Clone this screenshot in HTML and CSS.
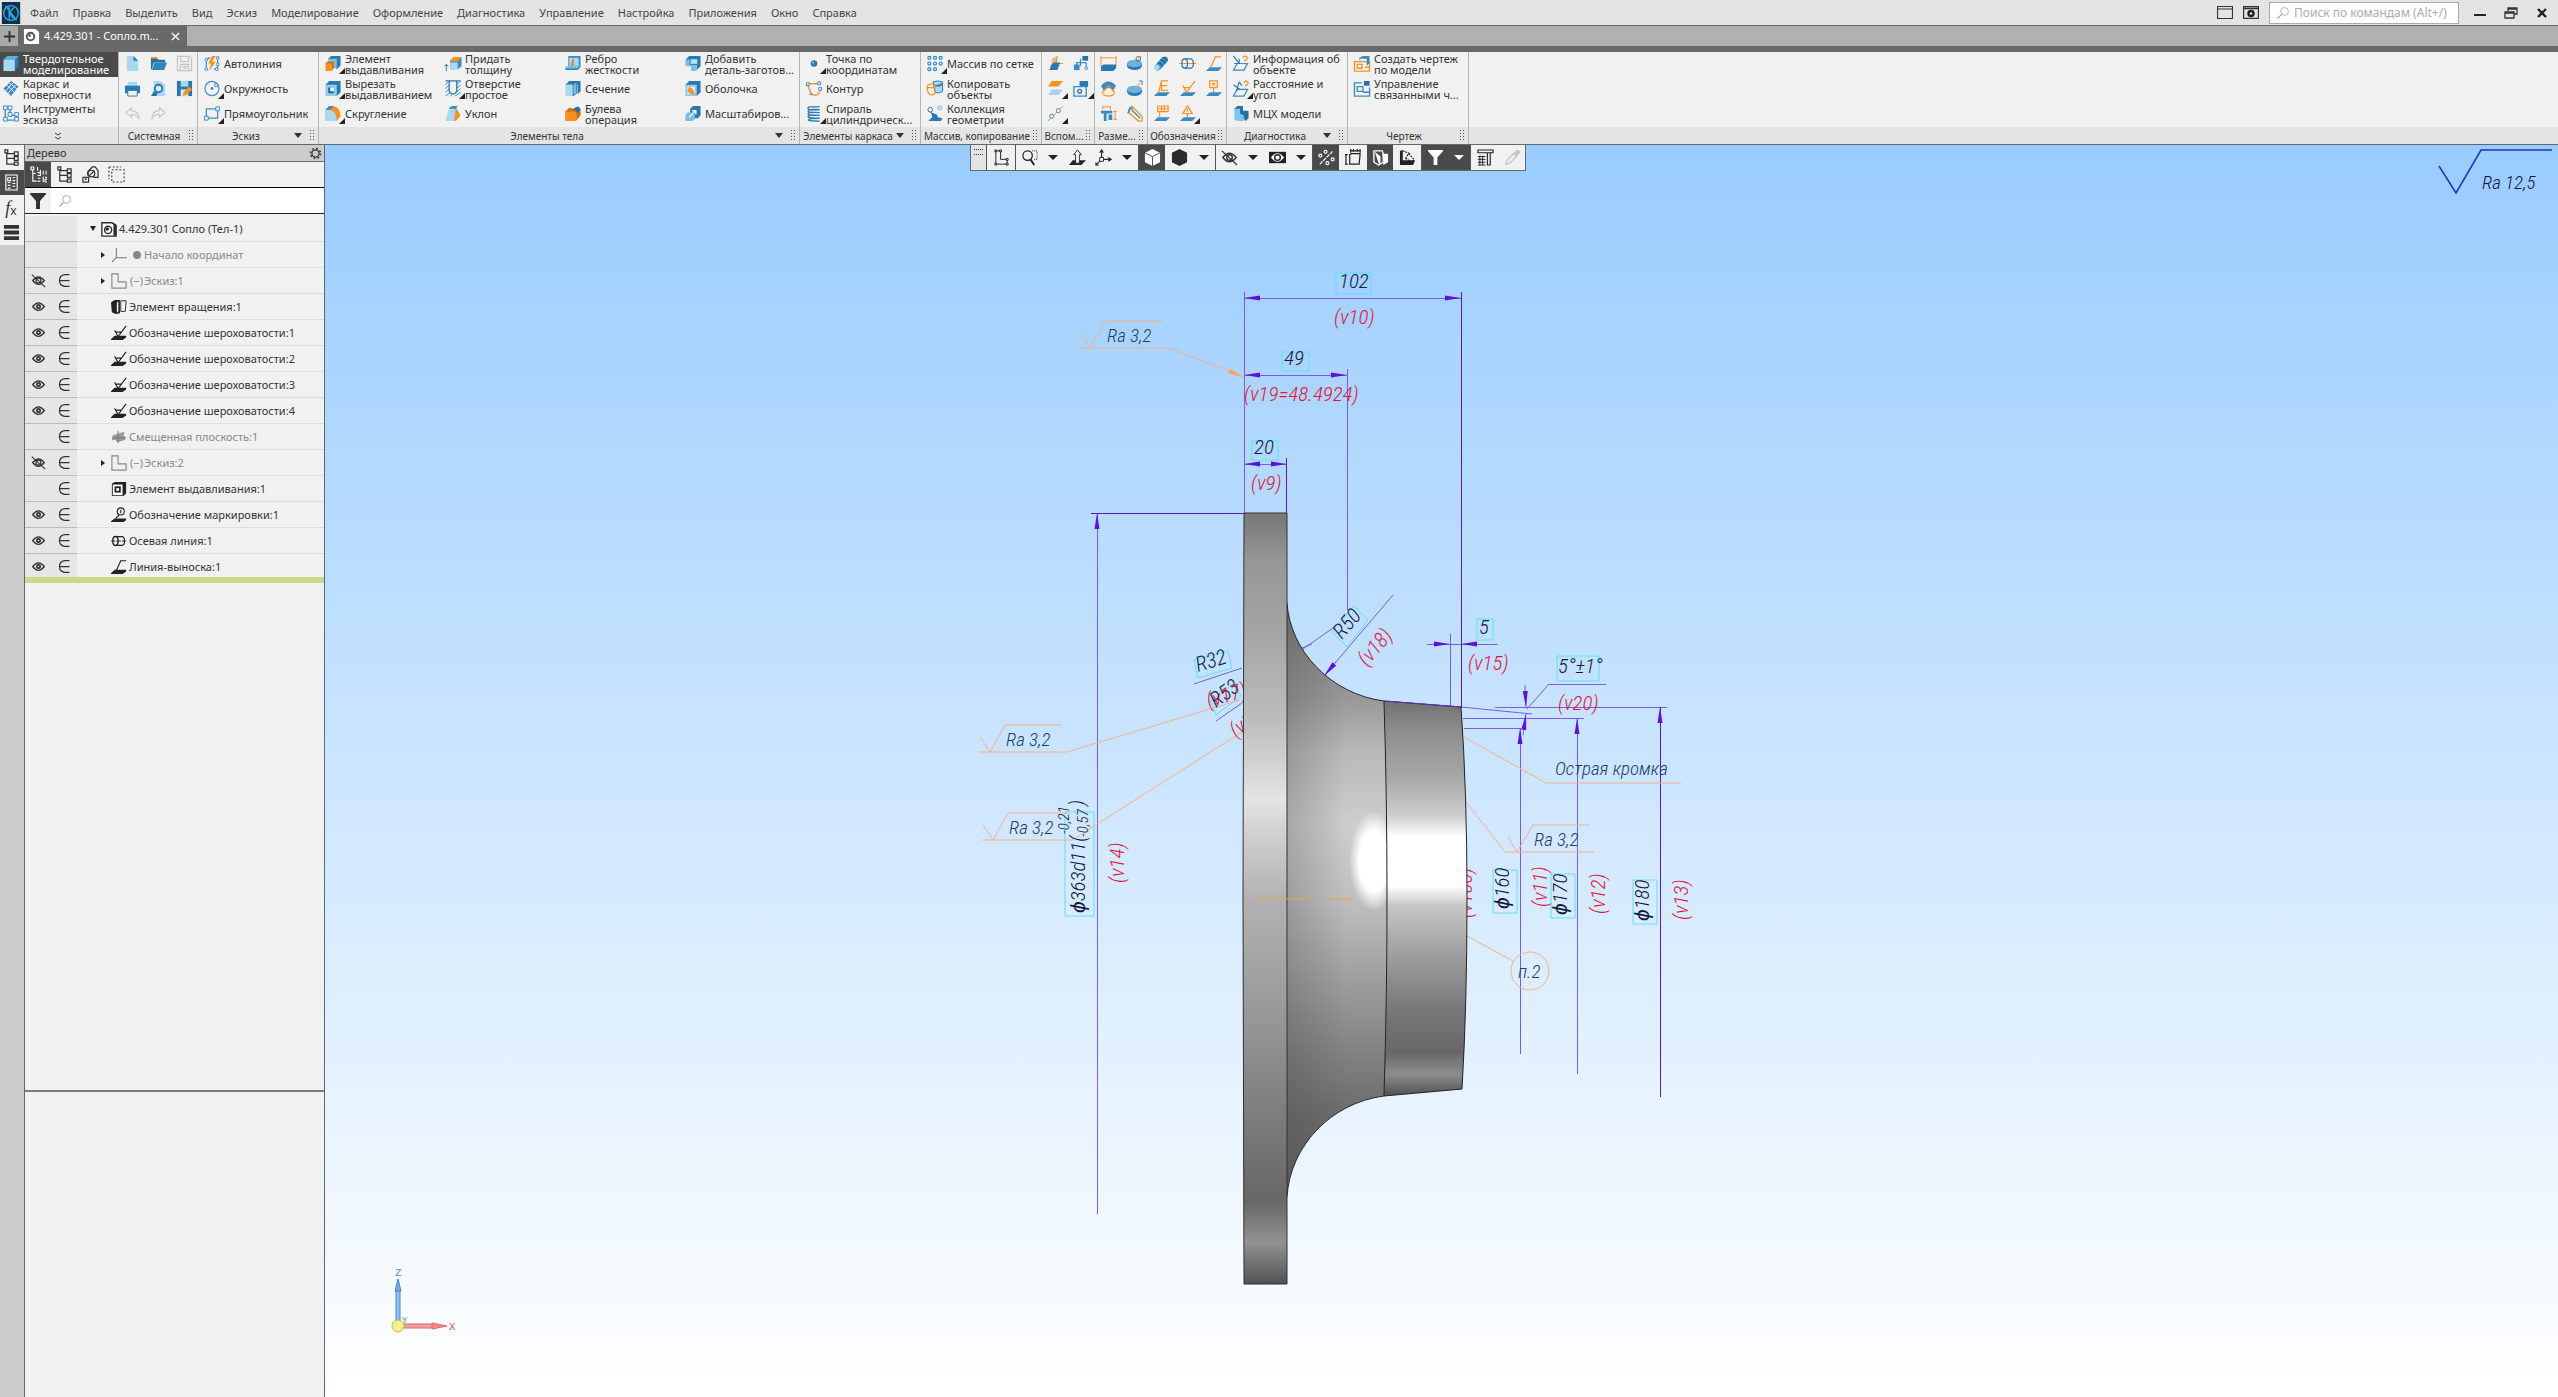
FILE: index.html
```html
<!DOCTYPE html>
<html lang="ru">
<head>
<meta charset="utf-8">
<title>4.429.301 - Сопло</title>
<link rel="stylesheet" href="styles.css">
</head>
<body>
<svg class="sprite" aria-hidden="true">
  <defs>
    <symbol id="i-solid" viewBox="0 0 18 18"><path d="M1 5l4-4h12v11l-4 4z" fill="#2a78b0"/><path d="M1 5l4-4h12l-4 4z" fill="#5db0e0"/><path d="M1 5h12v12H1z" fill="#a9d8f2"/></symbol>
    <symbol id="i-surf" viewBox="0 0 18 18"><path d="M9 1l8 6-8 10-8-8z" fill="#3a8ac4"/><path d="M4 5l9 8M11 3l-8 9M14 5l-8 9M7 3l9 7" stroke="#f1f1f1" fill="none"/></symbol>
    <symbol id="i-sketch" viewBox="0 0 18 18"><path d="M3 3h5v8h7v5H3z" fill="none" stroke="#3a8ac4" stroke-width="1.4"/><path d="M1 1h4v4H1zM6 1h4v4H6zM1 13h4v4H1zM13 13h4v4h-4zM13 8h4v4h-4zM6 8h4v4H6z" fill="#f1f1f1" stroke="#3a8ac4"/></symbol>
    <symbol id="i-new" viewBox="0 0 18 18"><path d="M3 1h7l5 5v11H3z" fill="#a9d8f2"/><path d="M10 1l5 5h-5z" fill="#2a78b0"/></symbol>
    <symbol id="i-open" viewBox="0 0 18 18"><path d="M1 3h6l2 2h7v3H4L2 15H1z" fill="#2a6ea4"/><path d="M5 8h13l-3 8H2z" fill="#2f84bf"/><path d="M1 2h6l1 2H1z" fill="#f7921e"/></symbol>
    <symbol id="i-save-off" viewBox="0 0 18 18"><path d="M1.500 1.500h13l2 2v13h-15zM5 2v5h8V2M4.500 16v-6h9v6M7 12h5M7 14h5" fill="none" stroke="#c4c4c4" stroke-width="1.300"/></symbol>
    <symbol id="i-print" viewBox="0 0 18 18"><path d="M4 2h10v4H4z" fill="#a9d8f2"/><path d="M1 6h16v8H1z" fill="#2a78b0"/><path d="M4 11h10v6H4z" fill="#f1f1f1" stroke="#2a78b0"/></symbol>
    <symbol id="i-preview" viewBox="0 0 18 18"><path d="M4 1h7l5 4v12H4z" fill="#a9d8f2"/><circle cx="9" cy="9" r="4" fill="#d8edf8" stroke="#2a78b0" stroke-width="2"/><path d="M1 17l3-5 4 1-1 4z" fill="#2a78b0"/></symbol>
    <symbol id="i-saveas" viewBox="0 0 18 18"><path d="M1 1h16v16H1z" fill="#2a78b0"/><path d="M5 1h8v6H5z" fill="#a9d8f2"/><path d="M5 10h8v7H5z" fill="#d8edf8"/><path d="M8 13l6-6 3 3-6 6-4 1z" fill="#f7921e"/></symbol>
    <symbol id="i-undo" viewBox="0 0 18 18"><path d="M8 3L2 8l6 5v-3c4 0 7 2 8 5 0-6-3-9-8-9z" fill="none" stroke="#c9c9c9" stroke-width="1.300"/></symbol>
    <symbol id="i-redo" viewBox="0 0 18 18"><path d="M10 3l6 5-6 5v-3c-4 0-7 2-8 5 0-6 3-9 8-9z" fill="none" stroke="#c9c9c9" stroke-width="1.300"/></symbol>
    <symbol id="i-auto" viewBox="0 0 18 18"><path d="M3 15V7q0-4 4-4M15 3v9q0 3-4 3" fill="none" stroke="#3a8ac4" stroke-width="1.300"/><path d="M9 1L5 9h3l-2 8 7-10H9l4-6z" fill="#f7921e"/><g fill="#f1f1f1" stroke="#3a8ac4"><circle cx="3" cy="5" r="1.500"/><circle cx="3" cy="15" r="1.500"/><circle cx="15" cy="3" r="1.500"/><circle cx="15" cy="10" r="1.500"/><circle cx="14" cy="15" r="1.500"/></g></symbol>
    <symbol id="i-circle" viewBox="0 0 18 18"><circle cx="9" cy="9" r="7.500" fill="none" stroke="#3a8ac4" stroke-width="1.200"/><circle cx="9" cy="9" r="1.500" fill="#3a8ac4"/><path d="M12 4h3v3h-3z" fill="#f1f1f1" stroke="#3a8ac4"/></symbol>
    <symbol id="i-rect" viewBox="0 0 18 18"><path d="M3 4h12v10H3z" fill="none" stroke="#3a8ac4" stroke-width="1.300"/><path d="M13 2h4v4h-4zM1 12h4v4H1z" fill="#f1f1f1" stroke="#3a8ac4"/></symbol>
    <symbol id="i-extrude" viewBox="0 0 18 18"><path d="M4 4l3-3h10v10l-4 4z" fill="#2a78b0"/><path d="M4 4h9v10H4z" fill="#7cc0e6"/><path d="M1 9l2-2h7v7l-2 2z" fill="#d06f10"/><path d="M1 9h7v8H1z" fill="#f7921e"/></symbol>
    <symbol id="i-cut" viewBox="0 0 18 18"><path d="M1 5l4-4h12v12l-4 4z" fill="#2a78b0"/><path d="M1 5h12v12H1z" fill="#8fcbea"/><path d="M4 8h6v6H4z" fill="#1f649a"/><path d="M6 8h4v4H6z" fill="#e8f5fc"/></symbol>
    <symbol id="i-fillet" viewBox="0 0 18 18"><path d="M1 5l4-4h4q8 1 8 11l-4 5H1z" fill="#f7921e"/><path d="M1 5h4q8 1 8 12H1z" fill="#a9d8f2"/><path d="M1 5l4-4h5L6 5z" fill="#3a8ac4"/></symbol>
    <symbol id="i-thick" viewBox="0 0 18 18"><path d="M6 6l4-4h8v10l-4 3H6z" fill="#3a8ac4"/><path d="M6 8h8v7H6z" fill="#a9d8f2"/><path d="M6 6l4-4h8l-4 5H6z" fill="#f7921e"/><path d="M2 17V10M0 12l2-2 2 2" fill="none" stroke="#2a78b0"/></symbol>
    <symbol id="i-hole" viewBox="0 0 18 18"><path d="M1 1h16M5 1v11q4 6 8 0V1" fill="none" stroke="#2a78b0" stroke-width="1.400"/><path d="M1 5l4-4M1 9l4-4M1 13l4-4M1 17l6-4M13 5l4-4M13 9l4-4M13 13l4-4M6 17l3-2M11 17l6-4" stroke="#3a8ac4"/></symbol>
    <symbol id="i-draft" viewBox="0 0 18 18"><path d="M5 3l7-2 4 9-4 7H1z" fill="#a9d8f2"/><path d="M12 3l5 8-5 6-2-1z" fill="#f7921e"/><path d="M5 3l3-2h6l-2 3H5z" fill="#3a8ac4"/></symbol>
    <symbol id="i-rib" viewBox="0 0 18 18"><path d="M4 1h13v12l-3 3H1v-3h3z" fill="#3a8ac4"/><path d="M5 3h10v9H5z" fill="#a9d8f2"/><path d="M8 5l2-2v8l-4 2z" fill="#d98a4a"/><path d="M1 13l3-2h12l-2 3H1z" fill="#79bde4"/></symbol>
    <symbol id="i-section" viewBox="0 0 18 18"><path d="M1 5l4-4h12v11l-3 3V5z" fill="#2a78b0"/><path d="M1 5h7v12H1z" fill="#a9d8f2"/><path d="M9 5l4-3v12l-4 3z" fill="#79bde4" stroke="#2a78b0"/></symbol>
    <symbol id="i-bool" viewBox="0 0 18 18"><path d="M1 7l4-4 5 1q6-5 7 2v5l-5 6H1z" fill="#d06f10"/><path d="M1 7h8q5 0 4 9l-2 1H1z" fill="#f7921e"/><path d="M10 4q5-5 7 1l-3 4q-1-4-5-4z" fill="#2a6ea4"/></symbol>
    <symbol id="i-addpart" viewBox="0 0 18 18"><path d="M1 5l4-4h12v11l-4 4V5z" fill="#2a78b0"/><path d="M1 5h8v5h4v7H7v-5H1z" fill="#79bde4"/><path d="M6 4h8v6H6z" fill="#b8e0f5" stroke="#2a78b0"/></symbol>
    <symbol id="i-shell" viewBox="0 0 18 18"><path d="M1 5l4-4h12v12l-4 4z" fill="#2a78b0"/><path d="M1 5h12v12H1z" fill="#8fcbea"/><path d="M3 7h8v8H3z" fill="#d8edf8"/><path d="M5 7l4 3 2 5H7l-4-3z" fill="#f7921e"/></symbol>
    <symbol id="i-scale" viewBox="0 0 18 18"><path d="M6 4l3-3h8v10l-3 3H6z" fill="#2a78b0"/><path d="M1 11l2-3h6l2 2v5l-3 2H1z" fill="#79bde4"/><path d="M5 13l6-6M8 6h4v4" fill="none" stroke="#e8f5fc" stroke-width="1.500"/></symbol>
    <symbol id="i-point" viewBox="0 0 18 18"><circle cx="9" cy="9" r="3.500" fill="#2a78b0"/><circle cx="8" cy="8" r="1" fill="#a9d8f2"/></symbol>
    <symbol id="i-contour" viewBox="0 0 18 18"><path d="M15 4H4q-2 0-1 3l2 5q1 4 4 4h1q4 0 5-4" fill="none" stroke="#f7921e" stroke-width="1.500"/><path d="M13 2h3v3h-3zM1 3h3v3H1z" fill="#f1f1f1" stroke="#3a8ac4"/><path d="M4 15h4M14 8h3v3h-3z" fill="#f1f1f1" stroke="#3a8ac4"/></symbol>
    <symbol id="i-spiral" viewBox="0 0 18 18"><path d="M15 2H4q-3 1 0 3h11q-14-1-12 2 1 1 12 1-14-1-12 2 1 1 12 1-14-1-12 2 1 1 12 1-12 0-12 2 2 1 12 1" fill="none" stroke="#2a78b0" stroke-width="1.400"/></symbol>
    <symbol id="i-array" viewBox="0 0 18 18"><g fill="none" stroke="#2a8acb" stroke-width="1.300"><circle cx="3" cy="3" r="1.600"/><circle cx="9" cy="3" r="1.600"/><circle cx="15" cy="3" r="1.600"/><circle cx="3" cy="9" r="1.600"/><circle cx="9" cy="9" r="1.600"/><circle cx="15" cy="9" r="1.600"/><circle cx="3" cy="15" r="1.600"/><circle cx="9" cy="15" r="1.600"/></g></symbol>
    <symbol id="i-copy" viewBox="0 0 18 18"><path d="M7 2q5-2 10 0v10q-4 3-8 1z" fill="#a9d8f2" stroke="#2a78b0"/><path d="M7 4q5 3 10-1l-1 3q-4 2-8 0z" fill="#2a78b0"/><path d="M1 6q4-4 8 0v8q-3 3-6 1Q0 12 1 6M1 8h7" fill="none" stroke="#f7921e" stroke-width="1.300"/></symbol>
    <symbol id="i-collect" viewBox="0 0 18 18"><circle cx="4" cy="5" r="2.500" fill="none" stroke="#2a78b0"/><path d="M3 7l5 3" stroke="#2a78b0"/><circle cx="14" cy="3" r="3" fill="#b8d6e8"/><path d="M5 8l6 2 1 3 5 1-2 3H2l4-4z" fill="#2a78b0"/></symbol>
    <symbol id="i-plane" viewBox="0 0 18 18"><path d="M5 4l6-3v11l-6 4z" fill="#f2b87a"/><path d="M11 1l-2 8h8M9 9l-7 7" fill="none" stroke="#f7921e"/><path d="M4 11l3-3h7l-3 8H3z" fill="#2a78b0"/></symbol>
    <symbol id="i-lcs" viewBox="0 0 18 18"><path d="M4 16V8h10M8 4v8M14 8v6" fill="none" stroke="#3a8ac4" stroke-width="1.300"/><path d="M10 1h6v5h-6z" fill="#2a6ea4"/><path d="M1 10h6v6H1z" fill="#3a8ac4"/><circle cx="14" cy="14" r="1.500" fill="#f1f1f1" stroke="#3a8ac4"/></symbol>
    <symbol id="i-offplane" viewBox="0 0 18 18"><path d="M5 1h12l-5 6H1z" fill="#f7921e"/><path d="M5 10h12l-5 6H1z" fill="#a9d0ee"/></symbol>
    <symbol id="i-ctrl" viewBox="0 0 18 18"><path d="M7 1h9v6l-5 3-4-3z" fill="#2a78b0"/><path d="M1 7h13v10H1z" fill="#f1f1f1" stroke="#3a8ac4" stroke-width="1.400"/><circle cx="7" cy="12" r="2" fill="none" stroke="#2a78b0" stroke-width="1.400"/></symbol>
    <symbol id="i-axis" viewBox="0 0 18 18"><path d="M1 17L17 1" stroke="#f7921e"/><circle cx="5" cy="12" r="2.200" fill="#f1f1f1" stroke="#3a8ac4"/><circle cx="12" cy="6" r="2.200" fill="#f1f1f1" stroke="#3a8ac4"/></symbol>
    <symbol id="i-dimlin" viewBox="0 0 18 18"><path d="M1 1v11M17 1v11M1 3h16" stroke="#f7921e" fill="none"/><path d="M1 12l3-2h13v4l-3 3H1z" fill="#2a78b0"/></symbol>
    <symbol id="i-dimdia" viewBox="0 0 18 18"><ellipse cx="9" cy="11" rx="8" ry="5" fill="#2a78b0"/><ellipse cx="9" cy="9" rx="8" ry="4" fill="#62b4e2"/><path d="M7 11L16 1" stroke="#f7921e"/><circle cx="13" cy="4" r="2.500" fill="none" stroke="#2a6ea4"/></symbol>
    <symbol id="i-dimang" viewBox="0 0 18 18"><path d="M1 6q8-9 16 0l-3 5q-5-5-10 0z" fill="#3a8ac4"/><path d="M2 14l7-8 7 8M3 15q6 4 12 0" fill="none" stroke="#f7921e" stroke-width="1.300"/></symbol>
    <symbol id="i-dimrad" viewBox="0 0 18 18"><ellipse cx="9" cy="12" rx="8" ry="5" fill="#2a78b0"/><ellipse cx="9" cy="10" rx="8" ry="4" fill="#62b4e2"/><path d="M8 11l7-8" stroke="#f7921e"/><path d="M14 1h3v4" fill="none" stroke="#2a6ea4"/></symbol>
    <symbol id="i-dimgrp" viewBox="0 0 18 18"><path d="M3 1v4M11 1v4M3 2h8M16 6v10M14 7h4M14 15h4" stroke="#f7921e" fill="none"/><path d="M1 6h12v3H1zM4 9h3v8H4zM9 10h4v6H9z" fill="#3a8ac4"/></symbol>
    <symbol id="i-dimline2" viewBox="0 0 18 18"><path d="M6 1l11 11v5H13L3 8M6 1L3 8" fill="none" stroke="#f7921e" stroke-width="1.300"/><path d="M6 5l9 9M2 9l2-6 3 1" fill="none" stroke="#3a8ac4" stroke-width="1.500"/></symbol>
    <symbol id="i-thread" viewBox="0 0 18 18"><path d="M2 11l8-9q6-2 6 4l-8 9q-6 4-6-4z" fill="#3a8ac4"/><path d="M5 8q4 0 5 4M8 5q4 0 5 4M11 3q3 0 4 3" fill="none" stroke="#1b4e78"/><ellipse cx="4" cy="13" rx="3" ry="3" fill="#a9d8f2"/></symbol>
    <symbol id="i-axisline" viewBox="0 0 18 18"><path d="M0 9h18" stroke="#f7921e"/><path d="M6 4h7l2 2v6l-2 2H6" fill="none" stroke="#2a78b0" stroke-width="1.300"/><ellipse cx="6" cy="9" rx="3" ry="5" fill="none" stroke="#2a78b0" stroke-width="1.300"/></symbol>
    <symbol id="i-base" viewBox="0 0 18 18"><path d="M5 13h13l-4 4H1z" fill="#3a8ac4"/></symbol>
    <symbol id="i-leader" viewBox="0 0 18 18"><use href="#i-base"/><path d="M6 13l5-11h6" fill="none" stroke="#f7921e" stroke-width="1.300"/></symbol>
    <symbol id="i-mark" viewBox="0 0 18 18"><use href="#i-base"/><path d="M6 13l3-12v10h7M9 1h7M9 6h6" fill="none" stroke="#f7921e" stroke-width="1.300"/></symbol>
    <symbol id="i-rough" viewBox="0 0 18 18"><use href="#i-base"/><path d="M4 6l4 7 9-12M5 8h7" fill="none" stroke="#f7921e" stroke-width="1.300"/></symbol>
    <symbol id="i-datum" viewBox="0 0 18 18"><use href="#i-base"/><path d="M5 1h8v7H5zM9 8v5M7 4h4M9 3v3" fill="none" stroke="#f7921e" stroke-width="1.300"/></symbol>
    <symbol id="i-tol" viewBox="0 0 18 18"><use href="#i-base"/><path d="M5 1h11v6H5zM9 1v6M12 1v6M5 4h11M7 7v6" fill="none" stroke="#f7921e" stroke-width="1.200"/></symbol>
    <symbol id="i-sign" viewBox="0 0 18 18"><use href="#i-base"/><path d="M9 1l5 8H4zM9 9v4M9 4v3" fill="none" stroke="#f7921e" stroke-width="1.300"/></symbol>
    <symbol id="i-info" viewBox="0 0 18 18"><path d="M5 9h11l-4 7H1z" fill="none" stroke="#3a8ac4" stroke-width="1.300"/><path d="M1 1l6 8M7 4v5H2" fill="none" stroke="#2a78b0" stroke-width="1.300"/><path d="M11 3q2-3 4-1t-2 4v1M13 9v1" fill="none" stroke="#f7921e" stroke-width="1.400"/></symbol>
    <symbol id="i-dist" viewBox="0 0 18 18"><path d="M5 10h11l-4 7H1z" fill="none" stroke="#3a8ac4" stroke-width="1.300"/><path d="M1 5l7 5M7 2L4 12M7 2l3 4" fill="none" stroke="#2a78b0" stroke-width="1.200"/><path d="M12 3q2-3 4-1t-2 4v1" fill="none" stroke="#f7921e" stroke-width="1.400"/></symbol>
    <symbol id="i-mcx" viewBox="0 0 18 18"><path d="M2 4l3-3h6v5h6v8l-3 3z" fill="#2a6ea4"/><path d="M2 4h6v5l4 2v6H5l-3-2z" fill="#7cc6ee"/></symbol>
    <symbol id="i-mkdraw" viewBox="0 0 18 18"><path d="M1 7h16v10H1zM4 10h5v4H4zM12 13h5" fill="none" stroke="#f7921e" stroke-width="1.400"/><path d="M6 3l4-2h7v8l-3 2V4H7v3" fill="#3a8ac4"/></symbol>
    <symbol id="i-linked" viewBox="0 0 18 18"><path d="M9 3H1v14h16V8M4 7h6v5H4zM10 13h7" fill="none" stroke="#3a8ac4" stroke-width="1.400"/><path d="M11 1h6v5h-6z" fill="#2a6ea4"/></symbol>

    <symbol id="v-tree" viewBox="0 0 18 18"><path d="M4 4v12h8M4 5h8M4 10h8" fill="none" stroke="currentColor" stroke-width="1.300"/><path d="M2 1h3v3H2zM12 3h4v4h-4zM12 8h4v4h-4zM12 14h4v3h-4z" fill="none" stroke="currentColor" stroke-width="1.300"/></symbol>
    <symbol id="v-list" viewBox="0 0 18 18"><path d="M3 1h12v16H3zM5 4h3v3H5zM5 9h3M5 12h3M5 15h3M10 4h3M10 7h3M10 10h3M10 13h3" fill="none" stroke="currentColor" stroke-width="1.200"/></symbol>
    <symbol id="v-bars" viewBox="0 0 18 18"><path d="M1 1h16v4H1zM1 7h16v4H1zM1 13h16v4H1z" fill="currentColor"/></symbol>
    <symbol id="v-tree2" viewBox="0 0 18 18"><path d="M1 1h3v3H1zM3 4v12h4M3 8h3M8 1v4M8 7h3v3H8M11 4v5M11 5v3M14 5v4M17 5v4M8 13h3M8 16h3M14 11v6M16 12h2v2h-2v3h2" fill="none" stroke="currentColor" stroke-width="1.200"/></symbol>
    <symbol id="v-rel" viewBox="0 0 18 18"><path d="M6 6l5-5h3l3 4v7h-5M6 6v4M1 12h6v5H1zM7 11l6-6" fill="none" stroke="currentColor" stroke-width="1.300"/><circle cx="10" cy="8" r="3.500" fill="none" stroke="currentColor" stroke-width="1.300"/><circle cx="4" cy="14" r="1" fill="currentColor"/></symbol>
    <symbol id="v-dash" viewBox="0 0 18 18"><path d="M4 4h13v13H4zM1 1h13M1 1v13" fill="none" stroke="currentColor" stroke-width="1.200" stroke-dasharray="2 2"/></symbol>
    <symbol id="v-funnel" viewBox="0 0 18 18"><path d="M1 1h16v1l-6 7v8H7V9L1 2z" fill="currentColor"/></symbol>
    <symbol id="v-search" viewBox="0 0 18 18"><circle cx="11" cy="7" r="5" fill="none" stroke="#999"/><path d="M7 11l-5 5" stroke="#999" stroke-width="1.500"/></symbol>
    <symbol id="v-gear" viewBox="0 0 18 18"><circle cx="9" cy="9" r="5" fill="none" stroke="currentColor" stroke-width="1.800"/><circle cx="9" cy="9" r="7" fill="none" stroke="currentColor" stroke-width="2" stroke-dasharray="2.500 3"/></symbol>
    <symbol id="v-eye" viewBox="0 0 18 18"><path d="M2 9q7-9 14 0-7 9-14 0z" fill="none" stroke="#333" stroke-width="1.500"/><circle cx="9" cy="9" r="3" fill="#333"/><circle cx="9" cy="9" r="1" fill="#e6e6e6"/></symbol>
    <symbol id="v-eyeoff" viewBox="0 0 18 18"><path d="M2 9q7-9 14 0-7 9-14 0z" fill="none" stroke="#333" stroke-width="1.500"/><circle cx="9" cy="9" r="3" fill="none" stroke="#333" stroke-width="1.500"/><path d="M1 2l16 15" stroke="#333" stroke-width="1.300"/></symbol>
    <symbol id="v-in" viewBox="0 0 18 18"><path d="M15 2H9Q3 3 3 9t6 7h6M3 9h12" fill="none" stroke="#333" stroke-width="1.500"/></symbol>
    <symbol id="v-part" viewBox="0 0 18 18"><path d="M1 2h11l5 3v12H1z" fill="#fff" stroke="#2b2b2b" stroke-width="1.500"/><path d="M12 1l5 3v12l-3 1V4z" fill="#2b2b2b"/><circle cx="8" cy="10" r="4" fill="none" stroke="#2b2b2b" stroke-width="1.600"/><circle cx="7" cy="9" r="2" fill="#2b2b2b"/></symbol>
    <symbol id="v-origin" viewBox="0 0 18 18"><path d="M6 1v11h12M6 12l-5 5" fill="none" stroke="#777" stroke-width="1.200"/></symbol>
    <symbol id="v-lshape" viewBox="0 0 18 18"><path d="M1 1h7v9h9v7H1z" fill="none" stroke="#888" stroke-width="1.300"/></symbol>
    <symbol id="v-revolve" viewBox="0 0 18 18"><path d="M0 4l4-3h6v15l-5 1-4-2z" fill="#222"/><path d="M6 4l3-2v12l-3 2zM11 2h6l-1 12h-5z" fill="#f1f1f1" stroke="#222"/><path d="M9 1v16" stroke="#222" stroke-dasharray="3 1"/></symbol>
    <symbol id="v-rough" viewBox="0 0 18 18"><path d="M4 12h13v2l-4 3H0v-1z" fill="#222"/><path d="M4 6l4 7 9-12M5 8h7" fill="none" stroke="#222" stroke-width="1.300"/></symbol>
    <symbol id="v-plane" viewBox="0 0 18 18"><path d="M2 7l13-4-1 6-13 4zM4 11l12-3v4l-9 3z" fill="#999"/><path d="M8 2v14M1 10h16" stroke="#777"/></symbol>
    <symbol id="v-extr" viewBox="0 0 18 18"><path d="M1 3l3-2h13v13l-3 3H1z" fill="#222"/><path d="M2 4h11v12H2z" fill="#fff"/><path d="M4 6h7v7H4z" fill="#222"/><path d="M6 8h3v3H6z" fill="#fff"/></symbol>
    <symbol id="v-mark" viewBox="0 0 18 18"><path d="M4 13h13v2l-3 2H0v-1z" fill="#222"/><circle cx="11" cy="5" r="4" fill="none" stroke="#222" stroke-width="1.200"/><path d="M5 13l4-4M11 3v4" stroke="#222" stroke-width="1.200"/></symbol>
    <symbol id="v-axis" viewBox="0 0 18 18"><path d="M0 9h18" stroke="#222" stroke-dasharray="5 1"/><path d="M6 4h7l2 2v6l-2 2H6" fill="none" stroke="#222" stroke-width="1.300"/><ellipse cx="5" cy="9" rx="3" ry="5" fill="none" stroke="#222" stroke-width="1.600"/></symbol>
    <symbol id="v-leader" viewBox="0 0 18 18"><path d="M4 12h13v2l-4 3H0v-1z" fill="#222"/><path d="M6 13l5-11h6" fill="none" stroke="#222" stroke-width="1.300"/></symbol>

    <symbol id="t-zoom" viewBox="0 0 18 18"><circle cx="7" cy="7" r="5" fill="none" stroke="#222" stroke-width="1.300"/><path d="M10 11l4 6" stroke="#222" stroke-width="2"/><path d="M12 2h5v9h-3" fill="none" stroke="#222" stroke-dasharray="1 1"/></symbol>
    <symbol id="t-normal" viewBox="0 0 18 18"><path d="M4 12h14l-5 5H0z" fill="#222"/><path d="M7 15V6H5l4-5 4 5h-2v9z" fill="#fff" stroke="#222"/></symbol>
    <symbol id="t-orient" viewBox="0 0 18 18"><path d="M7 10V2M7 11h9M7 11l-6 6M5 4l2-3 2 3M14 9l3 2-3 2M1 14v3h3" fill="none" stroke="#222" stroke-width="1.200"/><path d="M5 9h4v4H5z" fill="#fff" stroke="#222"/></symbol>
    <symbol id="t-cube" viewBox="0 0 18 18"><path d="M9 0l8 4v10l-8 4-8-4V4z" fill="#fff"/><path d="M1 4l8 4 8-4M9 8v10" fill="none" stroke="#4a4a4a"/></symbol>
    <symbol id="t-hex" viewBox="0 0 18 18"><path d="M9 0l8 4v10l-8 4-8-4V4z" fill="#2b2b2b"/></symbol>
    <symbol id="t-scene" viewBox="0 0 18 18"><path d="M0 3h18v12H0z" fill="#222"/><path d="M2 9q7-9 14 0-7 9-14 0z" fill="#fff"/><circle cx="9" cy="9" r="3" fill="#fff" stroke="#222" stroke-width="1.500"/></symbol>
    <symbol id="t-constr" viewBox="0 0 18 18"><path d="M2 16L16 2" stroke="#fff" stroke-width="1.300" stroke-dasharray="4 1"/><g fill="none" stroke="#fff" stroke-width="1.200"><circle cx="2.500" cy="7" r="1.600"/><circle cx="8" cy="3" r="1.600"/><circle cx="10" cy="15" r="1.600"/><circle cx="15.500" cy="11" r="1.600"/></g></symbol>
    <symbol id="t-dims" viewBox="0 0 18 18"><path d="M5 6l2-1h9l-1 11H5zM1 6v10M0 6h3M0 16h3M6 0v4M16 0v4M6 2h10M9 0v3M13 0v3" fill="none" stroke="#222" stroke-width="1.300"/></symbol>
    <symbol id="t-render" viewBox="0 0 18 18"><path d="M2 2h9l1 4v8l-5 3-5-3z" fill="none" stroke="#fff" stroke-width="1.400"/><path d="M3 3l6 5v8l-2-1zM11 5h6v9l-5 3z" fill="#fff"/></symbol>
    <symbol id="t-cut" viewBox="0 0 18 18"><path d="M1 2l3-1v11h13l-2 5H1z" fill="#222"/><path d="M7 10l3-5 6 6-2 3zM4 2l8 3" fill="none" stroke="#222" stroke-width="1.200" stroke-dasharray="2 1"/></symbol>
    <symbol id="t-caliper" viewBox="0 0 18 18"><path d="M1 1h16v3H1zM11 4h3v13h-3z" fill="none" stroke="#222" stroke-width="1.200"/><path d="M1 8h8M1 11h8M1 14h8M1 17h8M3 7v10M6 7v10" stroke="#222"/></symbol>
    <symbol id="t-pick" viewBox="0 0 18 18"><path d="M2 16l1-4 7-7 3 3-7 7z" fill="none" stroke="#c4c4c4" stroke-width="1.300"/><path d="M10 4l4-3q4 0 3 3l-3 4z" fill="#c4c4c4"/></symbol>
  </defs>
</svg>

<header class="titlebar">
  <svg class="logo" viewBox="0 0 20 24"><path d="M0 0h20v24H0z" fill="#0c3350"/><circle cx="10" cy="12" r="8" fill="none" stroke="#35a8e0" stroke-width="1.500"/><path d="M8 5v14M13 6l-5 6 5 6M4 4l12 16" fill="none" stroke="#35a8e0" stroke-width="1.500"/></svg>
  <nav class="menu">
    <a href="#">Файл</a><a href="#">Правка</a><a href="#">Выделить</a><a href="#">Вид</a><a href="#">Эскиз</a><a href="#">Моделирование</a><a href="#">Оформление</a><a href="#">Диагностика</a><a href="#">Управление</a><a href="#">Настройка</a><a href="#">Приложения</a><a href="#">Окно</a><a href="#">Справка</a>
  </nav>
  <div class="title-tools">
    <button aria-label="Окна"><svg viewBox="0 0 16 13"><path d="M.500.500h15v12H.500zM0 3h16" fill="none" stroke="#333" stroke-width="1.200"/></svg></button>
    <button aria-label="Настройка окна"><svg viewBox="0 0 16 13"><path d="M.500.500h15v12H.500zM0 2.500h16" fill="none" stroke="#333" stroke-width="1.400"/><circle cx="8" cy="7.500" r="2.500" fill="none" stroke="#222" stroke-width="2.500"/></svg></button>
  </div>
  <label class="search"><svg viewBox="0 0 18 18"><use href="#v-search"/></svg><input type="text" aria-label="Поиск по командам" placeholder="Поиск по командам (Alt+/)"></label>
  <div class="win-tools">
    <button aria-label="Свернуть"><svg viewBox="0 0 14 14"><path d="M1 9h12" stroke="#222" stroke-width="2"/></svg></button>
    <button aria-label="Восстановить"><svg viewBox="0 0 14 14"><path d="M1 6h9v6H1zM4 5V2h9v6h-3M4 3h9M1 7h9" fill="none" stroke="#333" stroke-width="1.300"/></svg></button>
    <button aria-label="Закрыть"><svg viewBox="0 0 14 14"><path d="M3 3l8 8M11 3l-8 8" stroke="#222" stroke-width="2.400"/></svg></button>
  </div>
</header>

<div class="tabs">
  <button class="tab-add" aria-label="Новая вкладка"><svg viewBox="0 0 14 14"><path d="M7 1v12M1 7h12" stroke="#333" stroke-width="2"/></svg></button>
  <div class="tab"><svg viewBox="0 0 18 18"><path d="M1 1h12l4 3v13H1z" fill="#fff"/><circle cx="8" cy="9" r="4" fill="none" stroke="#555" stroke-width="2"/><circle cx="7" cy="8" r="1.500" fill="#555"/></svg><span>4.429.301 - Сопло.m...</span><button aria-label="Закрыть вкладку"><svg viewBox="0 0 10 10"><path d="M1 1l8 8M9 1L1 9" stroke="#fff" stroke-width="1.600"/></svg></button></div>
</div>

<div class="ribbon">
  <section class="group g-modes">
    <div class="cmds">
      <button class="cmd active"><svg><use href="#i-solid"/></svg><span>Твердотельное<br>моделирование</span></button>
      <button class="cmd"><svg><use href="#i-surf"/></svg><span>Каркас и<br>поверхности</span></button>
      <button class="cmd"><svg><use href="#i-sketch"/></svg><span>Инструменты<br>эскиза</span></button>
    </div>
    <footer><span><svg class="chev" viewBox="0 0 8 8"><path d="M1 1l3 2 3-2M1 5l3 2 3-2" fill="none" stroke="#333"/></svg></span></footer>
  </section>
  <section class="group">
    <div class="icons cols3">
      <button aria-label="Создать"><svg><use href="#i-new"/></svg></button><button aria-label="Открыть"><svg><use href="#i-open"/></svg></button><button aria-label="Сохранить"><svg><use href="#i-save-off"/></svg></button>
      <button aria-label="Печать"><svg><use href="#i-print"/></svg></button><button aria-label="Просмотр"><svg><use href="#i-preview"/></svg></button><button aria-label="Сохранить как"><svg><use href="#i-saveas"/></svg></button>
      <button aria-label="Отменить"><svg><use href="#i-undo"/></svg></button><button aria-label="Повторить"><svg><use href="#i-redo"/></svg></button>
    </div>
    <footer><span>Системная</span><i class="grip"></i></footer>
  </section>
  <section class="group">
    <div class="cmds">
      <button class="cmd"><svg><use href="#i-auto"/></svg><span>Автолиния</span></button>
      <button class="cmd more"><svg><use href="#i-circle"/></svg><span>Окружность</span></button>
      <button class="cmd more"><svg><use href="#i-rect"/></svg><span>Прямоугольник</span></button>
    </div>
    <footer><span>Эскиз</span><i class="drop"></i><i class="grip"></i></footer>
  </section>
  <section class="group">
    <div class="cmds">
      <button class="cmd more"><svg><use href="#i-extrude"/></svg><span>Элемент<br>выдавливания</span></button>
      <button class="cmd more"><svg><use href="#i-cut"/></svg><span>Вырезать<br>выдавливанием</span></button>
      <button class="cmd more"><svg><use href="#i-fillet"/></svg><span>Скругление</span></button>
      <button class="cmd"><svg><use href="#i-thick"/></svg><span>Придать<br>толщину</span></button>
      <button class="cmd more"><svg><use href="#i-hole"/></svg><span>Отверстие<br>простое</span></button>
      <button class="cmd"><svg><use href="#i-draft"/></svg><span>Уклон</span></button>
      <button class="cmd"><svg><use href="#i-rib"/></svg><span>Ребро<br>жесткости</span></button>
      <button class="cmd"><svg><use href="#i-section"/></svg><span>Сечение</span></button>
      <button class="cmd"><svg><use href="#i-bool"/></svg><span>Булева<br>операция</span></button>
      <button class="cmd"><svg><use href="#i-addpart"/></svg><span>Добавить<br>деталь-заготов...</span></button>
      <button class="cmd"><svg><use href="#i-shell"/></svg><span>Оболочка</span></button>
      <button class="cmd"><svg><use href="#i-scale"/></svg><span>Масштабиров...</span></button>
    </div>
    <footer><span>Элементы тела</span><i class="drop"></i><i class="grip"></i></footer>
  </section>
  <section class="group">
    <div class="cmds">
      <button class="cmd more"><svg><use href="#i-point"/></svg><span>Точка по<br>координатам</span></button>
      <button class="cmd"><svg><use href="#i-contour"/></svg><span>Контур</span></button>
      <button class="cmd more"><svg><use href="#i-spiral"/></svg><span>Спираль<br>цилиндрическ...</span></button>
    </div>
    <footer><span>Элементы каркаса</span><i class="drop"></i><i class="grip"></i></footer>
  </section>
  <section class="group">
    <div class="cmds">
      <button class="cmd more"><svg><use href="#i-array"/></svg><span>Массив по сетке</span></button>
      <button class="cmd"><svg><use href="#i-copy"/></svg><span>Копировать<br>объекты</span></button>
      <button class="cmd"><svg><use href="#i-collect"/></svg><span>Коллекция<br>геометрии</span></button>
    </div>
    <footer><span>Массив, копирование</span><i class="grip"></i></footer>
  </section>
  <section class="group">
    <div class="icons cols2">
      <button aria-label="Плоскость"><svg><use href="#i-plane"/></svg></button><button aria-label="Система координат"><svg><use href="#i-lcs"/></svg></button>
      <button class="more" aria-label="Смещенная плоскость"><svg><use href="#i-offplane"/></svg></button><button class="more" aria-label="Контрольная точка"><svg><use href="#i-ctrl"/></svg></button>
      <button class="more" aria-label="Ось"><svg><use href="#i-axis"/></svg></button>
    </div>
    <footer><span>Вспом...</span><i class="grip"></i></footer>
  </section>
  <section class="group">
    <div class="icons cols2">
      <button aria-label="Линейный размер"><svg><use href="#i-dimlin"/></svg></button><button aria-label="Диаметральный размер"><svg><use href="#i-dimdia"/></svg></button>
      <button aria-label="Угловой размер"><svg><use href="#i-dimang"/></svg></button><button aria-label="Радиальный размер"><svg><use href="#i-dimrad"/></svg></button>
      <button aria-label="Размеры группы"><svg><use href="#i-dimgrp"/></svg></button><button aria-label="Размер линии"><svg><use href="#i-dimline2"/></svg></button>
    </div>
    <footer><span>Разме...</span><i class="grip"></i></footer>
  </section>
  <section class="group">
    <div class="icons cols3">
      <button aria-label="Резьба"><svg><use href="#i-thread"/></svg></button><button aria-label="Осевая линия"><svg><use href="#i-axisline"/></svg></button><button aria-label="Линия-выноска"><svg><use href="#i-leader"/></svg></button>
      <button aria-label="Клеймо"><svg><use href="#i-mark"/></svg></button><button aria-label="Шероховатость"><svg><use href="#i-rough"/></svg></button><button aria-label="База"><svg><use href="#i-datum"/></svg></button>
      <button aria-label="Допуск формы"><svg><use href="#i-tol"/></svg></button><button class="more" aria-label="Знак"><svg><use href="#i-sign"/></svg></button>
    </div>
    <footer><span>Обозначения</span><i class="grip"></i></footer>
  </section>
  <section class="group">
    <div class="cmds">
      <button class="cmd"><svg><use href="#i-info"/></svg><span>Информация об<br>объекте</span></button>
      <button class="cmd more"><svg><use href="#i-dist"/></svg><span>Расстояние и<br>угол</span></button>
      <button class="cmd"><svg><use href="#i-mcx"/></svg><span>МЦХ модели</span></button>
    </div>
    <footer><span>Диагностика</span><i class="drop"></i><i class="grip"></i></footer>
  </section>
  <section class="group">
    <div class="cmds">
      <button class="cmd"><svg><use href="#i-mkdraw"/></svg><span>Создать чертеж<br>по модели</span></button>
      <button class="cmd"><svg><use href="#i-linked"/></svg><span>Управление<br>связанными ч...</span></button>
    </div>
    <footer><span>Чертеж</span><i class="grip"></i></footer>
  </section>
  <div class="ribbon-rest"></div>
</div>

<main class="work">
  <nav class="rail">
    <button aria-label="Дерево"><svg><use href="#v-tree"/></svg></button>
    <button class="active" aria-label="Параметры"><svg><use href="#v-list"/></svg></button>
    <button class="fx"><i>f</i><sub>x</sub></button>
    <button aria-label="Меню"><svg><use href="#v-bars"/></svg></button>
  </nav>
  <aside class="panel">
    <h2><span>Дерево</span><svg><use href="#v-gear"/></svg></h2>
    <div class="panel-tools">
      <button class="active" aria-label="Структура"><svg><use href="#v-tree2"/></svg></button>
      <button aria-label="Последовательность"><svg><use href="#v-tree"/></svg></button>
      <button aria-label="Связи"><svg><use href="#v-rel"/></svg></button>
      <button aria-label="Выделение"><svg><use href="#v-dash"/></svg></button>
    </div>
    <label class="filter"><span><svg><use href="#v-funnel"/></svg></span><svg class="mag"><use href="#v-search"/></svg><input type="text" aria-label="Фильтр"></label>
    <ul class="tree">
      <li><b></b><b></b><p class="root"><i class="open"></i><svg><use href="#v-part"/></svg><span>4.429.301 Сопло (Тел-1)</span></p></li>
      <li class="dim"><b></b><b></b><p><i class="closed"></i><svg><use href="#v-origin"/></svg><em class="dot"></em><span>Начало координат</span></p></li>
      <li class="dim"><b><svg><use href="#v-eyeoff"/></svg></b><b><svg><use href="#v-in"/></svg></b><p><i class="closed"></i><svg><use href="#v-lshape"/></svg><em>(‒)</em><span>Эскиз:1</span></p></li>
      <li><b><svg><use href="#v-eye"/></svg></b><b><svg><use href="#v-in"/></svg></b><p><i></i><svg><use href="#v-revolve"/></svg><span>Элемент вращения:1</span></p></li>
      <li><b><svg><use href="#v-eye"/></svg></b><b><svg><use href="#v-in"/></svg></b><p><i></i><svg><use href="#v-rough"/></svg><span>Обозначение шероховатости:1</span></p></li>
      <li><b><svg><use href="#v-eye"/></svg></b><b><svg><use href="#v-in"/></svg></b><p><i></i><svg><use href="#v-rough"/></svg><span>Обозначение шероховатости:2</span></p></li>
      <li><b><svg><use href="#v-eye"/></svg></b><b><svg><use href="#v-in"/></svg></b><p><i></i><svg><use href="#v-rough"/></svg><span>Обозначение шероховатости:3</span></p></li>
      <li><b><svg><use href="#v-eye"/></svg></b><b><svg><use href="#v-in"/></svg></b><p><i></i><svg><use href="#v-rough"/></svg><span>Обозначение шероховатости:4</span></p></li>
      <li class="dim"><b></b><b><svg><use href="#v-in"/></svg></b><p><i></i><svg><use href="#v-plane"/></svg><span>Смещенная плоскость:1</span></p></li>
      <li class="dim"><b><svg><use href="#v-eyeoff"/></svg></b><b><svg><use href="#v-in"/></svg></b><p><i class="closed"></i><svg><use href="#v-lshape"/></svg><em>(‒)</em><span>Эскиз:2</span></p></li>
      <li><b></b><b><svg><use href="#v-in"/></svg></b><p><i></i><svg><use href="#v-extr"/></svg><span>Элемент выдавливания:1</span></p></li>
      <li><b><svg><use href="#v-eye"/></svg></b><b><svg><use href="#v-in"/></svg></b><p><i></i><svg><use href="#v-mark"/></svg><span>Обозначение маркировки:1</span></p></li>
      <li><b><svg><use href="#v-eye"/></svg></b><b><svg><use href="#v-in"/></svg></b><p><i></i><svg><use href="#v-axis"/></svg><span>Осевая линия:1</span></p></li>
      <li><b><svg><use href="#v-eye"/></svg></b><b><svg><use href="#v-in"/></svg></b><p><i></i><svg><use href="#v-leader"/></svg><span>Линия-выноска:1</span></p></li>
    </ul>
    <div class="lower"></div>
  </aside>

  <section class="view">
    <svg class="scene" viewBox="325 145 2233 1252" preserveAspectRatio="xMidYMid meet">
      <defs>
        <linearGradient id="flange" gradientUnits="userSpaceOnUse" x1="0" y1="513" x2="0" y2="1285">
          <stop offset="0" stop-color="#777"/><stop offset=".060" stop-color="#969696"/><stop offset=".150" stop-color="#a4a4a4"/><stop offset=".270" stop-color="#bdbdbd"/><stop offset=".370" stop-color="#e4e4e4"/><stop offset=".420" stop-color="#cfcfcf"/><stop offset=".500" stop-color="#b2b2b2"/><stop offset=".630" stop-color="#9c9c9c"/><stop offset=".780" stop-color="#7d7d7d"/><stop offset=".890" stop-color="#676767"/><stop offset=".945" stop-color="#929292"/><stop offset="1" stop-color="#505050"/>
        </linearGradient>
        <linearGradient id="cone" gradientUnits="userSpaceOnUse" x1="0" y1="700" x2="0" y2="1096">
          <stop offset="0" stop-color="#707070"/><stop offset=".080" stop-color="#8e8e8e"/><stop offset=".200" stop-color="#a9a9a9"/><stop offset=".290" stop-color="#cdcdcd"/><stop offset=".345" stop-color="#fff"/><stop offset=".470" stop-color="#fff"/><stop offset=".520" stop-color="#c6c6c6"/><stop offset=".660" stop-color="#9a9a9a"/><stop offset=".780" stop-color="#787878"/><stop offset=".890" stop-color="#686868"/><stop offset=".945" stop-color="#8d8d8d"/><stop offset="1" stop-color="#505050"/>
        </linearGradient>
        <linearGradient id="flare" gradientUnits="userSpaceOnUse" x1="0" y1="603" x2="0" y2="1197">
          <stop offset="0" stop-color="#777"/><stop offset=".160" stop-color="#989898"/><stop offset=".250" stop-color="#b8b8b8"/><stop offset=".370" stop-color="#cecece"/><stop offset=".500" stop-color="#bfbfbf"/><stop offset=".620" stop-color="#a2a2a2"/><stop offset=".750" stop-color="#838383"/><stop offset=".860" stop-color="#6c6c6c"/><stop offset="1" stop-color="#626262"/>
        </linearGradient>
        <linearGradient id="side" x1="0" x2="1" y1="0" y2="0"><stop offset="0" stop-color="#444" stop-opacity=".28"/><stop offset=".600" stop-color="#444" stop-opacity="0"/></linearGradient>
        <radialGradient id="shine"><stop offset=".600" stop-color="#fff"/><stop offset="1" stop-color="#fff" stop-opacity="0"/></radialGradient>
        <clipPath id="flareclip"><path d="M1287 603C1290 650 1330 694 1384 701Q1387 800 1387 898Q1387 1000 1384 1096C1330 1103 1290 1147 1287 1197z"/></clipPath>
        <marker id="ar" viewBox="0 0 16 6" refX="16" refY="3" markerWidth="16" markerHeight="6" markerUnits="userSpaceOnUse" orient="auto-start-reverse"><path d="M0 .500L16 3 0 5.500z" fill="#5f10e0"/></marker>
        <marker id="aro" viewBox="0 0 16 6" refX="16" refY="3" markerWidth="16" markerHeight="6" markerUnits="userSpaceOnUse" orient="auto"><path d="M0 .500L16 3 0 5.500z" fill="#f7a35c"/></marker>
      </defs>

      <g class="frame">
        <path d="M1336 273h35v21h-35zM1282 352h27v19h-27zM1252 441h26v19h-26zM1065 812h29v104h-29zM1477 619h16v21h-16zM1557 656h42v25h-42zM1493 870h24v43h-24zM1551 874h24v44h-24zM1633 880h24v44h-24z"/>
        <path d="M1332 632l15 15 21-27-14-14zM1194 660l34-9 4 17-34 10zM1211 701l22-17 8 12-25 19z"/>
      </g>
      <g class="light">
        <path d="M1244 292v221M1347 369v241M1450 634v72M1495 707h172M1463 718h121M1464 728h56M1549 684h57M1450 644h11" class="crisp"/>
        <path d="M1461 707l71 7M1303 649l30-21M1302 648l10-4M1194 684l48-16M1216 721l26-18M1549 684l-22 25"/>
        <path class="crisp" d="M1244 298h217" marker-start="url(#ar)" marker-end="url(#ar)"/>
        <path class="crisp" d="M1244 375h103" marker-start="url(#ar)" marker-end="url(#ar)"/>
        <path class="crisp" d="M1244 464h43" marker-start="url(#ar)" marker-end="url(#ar)"/>
        <path class="crisp" d="M1427 644h23" marker-end="url(#ar)"/><path class="crisp" d="M1498 644h-37" marker-end="url(#ar)"/>
        <path d="M1525 685l1 22" marker-end="url(#ar)"/><path d="M1523 735l3-21" marker-end="url(#ar)"/>
        <path d="M1393 595l-69 81" marker-end="url(#ar)"/>
        <path class="crisp" d="M1520 1054V728" marker-end="url(#ar)"/><path class="crisp" d="M1577 1074V718" marker-end="url(#ar)"/>
        <path class="crisp" d="M1097 1214V513" marker-end="url(#ar)"/>
      </g>
      <g class="strong crisp"><path d="M1461 292v416M1286 458v55M1091 513h153"/><path d="M1660 1097V707" marker-end="url(#ar)"/></g>
      <g class="leader">
        <path d="M1079 348h90M1081 333l9 15 15-27h58M979 752h88M980 737l10 15 15-27h57M1067 752l173-52M982 840h90M983 825l10 15 15-27h62M1072 840l170-108M1505 852h89M1508 837l9 15 16-27h57M1505 852l-39-50M1546 783h135M1546 783l-82-46M1467 936l46 25"/>
        <path d="M1169 348l75 29" marker-end="url(#aro)"/>
        <circle cx="1530" cy="971" r="19"/>
      </g>
      <g class="dim-text">
        <text x="1339" y="288">102</text><text x="1284" y="365">49</text><text x="1254" y="454">20</text>
        <text x="1479" y="634">5</text><text x="1558" y="673">5°±1°</text>
        <text transform="translate(1198 672) rotate(-17)">R32</text><text transform="translate(1216 708) rotate(-36)">R53</text><text transform="translate(1342 640) rotate(-49)">R50</text>
        <text transform="translate(1085 913) rotate(-90)">ϕ363d11(</text><text transform="translate(1084 806) rotate(-90)">)</text>
        <text transform="translate(1509 909) rotate(-90)">ϕ160</text><text transform="translate(1567 915) rotate(-90)">ϕ170</text><text transform="translate(1649 921) rotate(-90)">ϕ180</text>
      </g>
      <g class="dim-text small">
        <text transform="translate(1069 834) rotate(-90)">-0,21</text><text transform="translate(1088 837) rotate(-90)">-0,57</text>
      </g>
      <g class="dim-text note">
        <text x="1107" y="342">Ra 3,2</text><text x="1006" y="746">Ra 3,2</text><text x="1009" y="834">Ra 3,2</text><text x="1534" y="846">Ra 3,2</text>
        <text x="1555" y="775">Острая кромка</text><text x="1518" y="978">п.2</text>
      </g>
      <g class="dim-text var">
        <text x="1334" y="324">(v10)</text><text x="1244" y="401">(v19=48.4924)</text><text x="1251" y="490">(v9)</text><text x="1468" y="670">(v15)</text><text x="1558" y="710">(v20)</text>
        <text transform="translate(1209 708) rotate(-17)">(v17)</text><text transform="translate(1236 738) rotate(-36)">(v16)</text><text transform="translate(1367 667) rotate(-49)">(v18)</text>
        <text transform="translate(1124 883) rotate(-90)">(v14)</text><text transform="translate(1547 907) rotate(-90)">(v11)</text><text transform="translate(1605 914) rotate(-90)">(v12)</text><text transform="translate(1688 920) rotate(-90)">(v13)</text><text transform="translate(1472 918) rotate(-90)">(v100)</text>
      </g>

      <g clip-path="url(#flareclip)">
        <path d="M1286 603h102v594h-102z" fill="url(#flare)"/>
        <path d="M1286 603h102v594h-102z" fill="url(#side)"/>
        <ellipse cx="1374" cy="861" rx="25" ry="50" fill="url(#shine)"/>
      </g>
      <path d="M1384 701L1461 707Q1467 790 1467 898T1462 1089L1384 1096Q1387 1000 1387 898T1384 701z" fill="url(#cone)" stroke="#222"/>
      <path d="M1287 603C1290 650 1330 694 1384 701M1287 1197C1290 1147 1330 1103 1384 1096" fill="none" stroke="#222"/>
      <path d="M1385 701l76 6" stroke="#5f30c0" fill="none"/>
      <path d="M1244 513h43v771h-43q-2-386 0-771z" fill="url(#flange)" stroke="#333"/>
      <path d="M1258 899h55M1328 899h25" class="axis"/>
    </svg>

    <div class="viewbar">
      <i class="handle"></i>
      <button class="wide" aria-label="Эскиз"><svg viewBox="0 0 18 18"><path d="M3 2h5v9h7v5H3z" fill="none" stroke="#222"/><path d="M2 1h2v2H2zM7 1h2v2H7zM2 15h2v2H2zM14 15h2v2h-2zM14 10h2v2h-2z" fill="#fff" stroke="#222"/></svg></button><u></u>
      <button aria-label="Масштаб"><svg><use href="#t-zoom"/></svg></button><button class="dd" aria-label="Еще"></button><button aria-label="Нормально к"><svg><use href="#t-normal"/></svg></button><button aria-label="Ориентация"><svg><use href="#t-orient"/></svg></button><button class="dd" aria-label="Еще"></button><u></u>
      <button class="on" aria-label="Каркас"><svg><use href="#t-cube"/></svg></button><button class="wide" aria-label="Полутоновое"><svg><use href="#t-hex"/></svg></button><button class="dd" aria-label="Еще"></button><u></u>
      <button aria-label="Скрыть"><svg><use href="#v-eyeoff"/></svg></button><button class="dd" aria-label="Еще"></button><button aria-label="Сцена"><svg><use href="#t-scene"/></svg></button><button class="dd" aria-label="Еще"></button><u></u>
      <button class="on" aria-label="Ограничения"><svg><use href="#t-constr"/></svg></button><button class="wide" aria-label="Размеры"><svg><use href="#t-dims"/></svg></button><button class="on" aria-label="Отображение"><svg><use href="#t-render"/></svg></button><button class="wide" aria-label="Сечение"><svg><use href="#t-cut"/></svg></button><u></u>
      <button class="on" aria-label="Фильтр"><svg><use href="#v-funnel"/></svg></button><button class="dd on" aria-label="Еще"></button><u></u>
      <button class="wide" aria-label="Измерить"><svg><use href="#t-caliper"/></svg></button><button aria-label="Пипетка"><svg><use href="#t-pick"/></svg></button>
    </div>

    <svg class="corner" viewBox="0 0 120 50"><path d="M1 21l17 27 25-43h71" fill="none" stroke="#1a35b8" stroke-width="1.500"/><text x="44" y="44">Ra 12,5</text></svg>
    <svg class="triad" viewBox="0 0 80 72">
      <path d="M15 58V22h4v36z" fill="#8fc2f0" stroke="#4a82c4"/><path d="M17 11l3 12h-6z" fill="#6fb0e8" stroke="#4a82c4"/>
      <path d="M20 56h32v4H20z" fill="#f5a0a0" stroke="#d86a6a"/><path d="M66 58l-15 3v-6z" fill="#f08888" stroke="#d86a6a"/>
      <circle cx="17" cy="58" r="6" fill="#f6f08a" stroke="#c0b860"/>
      <text x="14" y="8" fill="#5a86d0">Z</text><text x="68" y="62" fill="#e05050">X</text><text x="21" y="55" fill="#4a9a80" class="y">Y</text>
    </svg>
  </section>
</main>
</body>
</html>
```
FILE: styles.css
```css
* { box-sizing: border-box; }
body { margin: 0; height: 100vh; overflow: hidden; display: flex; flex-direction: column; font: 11px/11px "Noto Sans", "Open Sans", sans-serif; color: #333; background: #f1f1f1; }
button { border: 0; padding: 0; margin: 0; background: none; font: inherit; color: inherit; display: flex; align-items: center; justify-content: center; position: relative; }
svg { display: block; flex: none; width: 18px; height: 18px; }
.sprite { position: absolute; width: 0; height: 0; }

.titlebar { display: flex; flex: none; align-items: center; height: 26px; background: #e4e4e4; border-bottom: 1px solid #6b6b6b; padding-left: 1px; }
.logo { width: 20px; height: 22px; }
.menu { display: flex; gap: 14px; margin-left: 9px; flex: 1; }
.menu a { color: #444; text-decoration: none; font-size: 11px; line-height: 16px; }
.title-tools { display: flex; gap: 10px; margin-right: 10px; }
.title-tools svg { width: 16px; height: 13px; }
.search { display: flex; align-items: center; width: 190px; height: 22px; background: #fff; border: 1px solid #aaa; padding-left: 6px; }
.search svg { width: 14px; height: 14px; }
.search input { border: 0; outline: 0; background: none; flex: 1; min-width: 0; font: 12px/16px "Noto Sans", sans-serif; padding: 0 0 0 4px; }
.search input::placeholder { color: #aaa; opacity: 1; }
.win-tools { display: flex; gap: 17px; margin: 0 9px 0 14px; }
.win-tools svg { width: 14px; height: 14px; }

.tabs { display: flex; flex: none; height: 26px; background: #b1b1b1; border-bottom: 6px solid #696969; }
.tab-add { width: 18px; background: #a9a9a9; }
.tab-add svg { width: 13px; height: 13px; }
.tab { display: flex; align-items: center; width: 169px; background: #696969; color: #fff; font-size: 11px; line-height: 16px; padding: 0 7px 0 5px; }
.tab svg { width: 17px; height: 17px; }
.tab span { flex: 1; padding-left: 4px; white-space: nowrap; }
.tab button svg { width: 9px; height: 9px; }

.ribbon { display: flex; flex: none; height: 93px; background: #f1f1f1; border-bottom: 1px solid #5c6a78; }
.group { display: flex; flex-direction: column; border-right: 1px solid #b5b5b5; }
.cmds { flex: 1; display: grid; grid-template-rows: repeat(3, 25px); grid-auto-flow: column; grid-auto-columns: 120px; }
.g-modes .cmds { grid-auto-columns: 118px; }
.cmd { justify-content: flex-start; gap: 3px; padding: 0 0 2px 5px; text-align: left; white-space: nowrap; }
.g-modes .cmd { padding-left: 2px; gap: 3px; }
.cmd svg { width: 18px; height: 17px; }
.cmd.active { background: #4a4a4a; color: #fff; }
.more::after { content: ""; position: absolute; left: 20px; bottom: 3px; border: 3px solid; border-color: transparent #222 #222 transparent; }
.icons { flex: 1; display: grid; grid-auto-rows: 25px; }
.icons button { padding-bottom: 2px; }
.icons svg { height: 17px; width: 17px; }
.cols2 { grid-template-columns: repeat(2, 26px); }
.cols3 { grid-template-columns: repeat(3, 26px); }
.ribbon footer { height: 17px; background: #e4e4e4; display: flex; align-items: center; font-size: 10px; line-height: 14px; padding-right: 2px; }
.ribbon footer span { flex: 1; display: flex; justify-content: center; white-space: nowrap; }
.chev { width: 8px; height: 8px; }
.drop { border: 4px solid transparent; border-top: 5px solid #333; border-bottom: 0; margin-right: 8px; }
.grip { width: 6px; height: 12px; background: linear-gradient(#555, #555) 0 0 / 1px 100%, linear-gradient(#555, #555) 3px 0 / 1px 100%; background-repeat: no-repeat; -webkit-mask: repeating-linear-gradient(#000 0 1px, transparent 1px 3px); mask: repeating-linear-gradient(#000 0 1px, transparent 1px 3px); }
.ribbon-rest { flex: 1; background: linear-gradient(#f1f1f1 75px, #e4e4e4 75px); }

.work { flex: 1; min-height: 0; display: flex; }
.rail { width: 25px; background: #ccc; border-right: 1px solid #5c6a78; }
.rail button { width: 24px; height: 25px; background: #f1f1f1; padding-right: 2px; }
.rail svg { height: 17px; width: 17px; }
.rail .active, .panel-tools .active { background: #4a4a4a; color: #fff; }
.rail .fx { font: 18px/20px "Liberation Serif", serif; }
.fx sub { font: 12px/12px "Noto Sans", sans-serif; align-self: flex-end; padding-bottom: 3px; }

.panel { width: 300px; background: #f1f1f1; border-right: 1px solid #5c6a78; display: flex; flex-direction: column; }
.panel h2 { display: flex; flex: none; justify-content: space-between; align-items: center; margin: 0; height: 17px; padding: 0 2px; background: #ccc; border-bottom: 1px solid #6b6b6b; font-size: 11px; line-height: 14px; font-weight: 400; }
.panel h2 svg { width: 13px; height: 13px; }
.panel-tools { display: flex; flex: none; height: 25px; }
.panel-tools button { width: 26px; }
.panel-tools svg { width: 17px; height: 17px; }
.filter { display: flex; flex: none; align-items: center; height: 27px; border-top: 1px solid #000; border-bottom: 1px solid #222; background: #fff; }
.filter span { width: 26px; height: 25px; background: #f1f1f1; display: flex; align-items: center; justify-content: center; }
.filter .mag { width: 14px; height: 14px; margin-left: 7px; }
.filter input { border: 0; outline: 0; flex: 1; min-width: 0; background: none; }
.tree { list-style: none; margin: 0; padding: 2px 0 0; flex: 1; overflow: hidden; }
.tree::after { content: ""; display: block; height: 6px; margin-top: -3px; background: #c9d98a; position: relative; }
.tree li { display: flex; height: 26px; font-size: 11px; line-height: 16px; }
.tree b { width: 26px; background: #e6e6e6; border-bottom: 1px solid #bbb; display: flex; align-items: center; justify-content: center; }
.tree b svg { width: 15px; height: 15px; }
.tree p { margin: 0; flex: 1; display: flex; align-items: center; border-bottom: 1px solid #ddd; padding-left: 23px; white-space: nowrap; }
.tree .root { padding-left: 13px; }
.tree p svg { width: 16px; height: 16px; margin-right: 2px; }
.tree i { width: 11px; display: flex; }
.tree i.open::before { content: ""; border: 3px solid transparent; border-top: 5px solid #222; border-bottom: 0; }
.tree i.closed::before { content: ""; border: 3px solid transparent; border-left: 4px solid #222; border-right: 0; margin-left: 1px; }
.tree em { font-style: normal; width: 15px; text-align: center; }
.tree .dot::before { content: ""; display: block; width: 8px; height: 8px; margin-left: 4px; border-radius: 50%; background: #888; }
.dim { color: #888; }
.lower { flex: none; height: 307px; border-top: 2px solid #7c7c7c; }

.view { flex: 1; position: relative; background: linear-gradient(#99ccff, #fff); overflow: hidden; }
.scene { position: absolute; inset: 0; width: 100%; height: 100%; }
.crisp { shape-rendering: crispEdges; }
.frame { fill: none; stroke: #5fe0f5; }
.light { fill: none; stroke: #7a5ce0; }
.strong { fill: none; stroke: #5a1ab0; }
.leader { fill: none; stroke: #f0b090; }
.axis { fill: none; stroke: #f0a050; }
.dim-text, .corner text { font: italic 300 21px "Roboto Condensed", Roboto, sans-serif; fill: #101840; }
.dim-text.note { font-size: 19px; fill: #223a6a; }
.dim-text.small { font-size: 15px; }
.dim-text.var { fill: #e0143c; }
.viewbar { position: absolute; left: 645px; top: 0; height: 26px; display: flex; background: #f1f1f1; border: 1px solid #5c6a78; border-top: 0; }
.viewbar u { width: 1px; background: #555; }
.viewbar button { width: 26px; }
.viewbar .wide { width: 28px; }
.viewbar .dd { width: 22px; }
.viewbar svg { width: 17px; height: 17px; }
.viewbar .on { background: #4a4a4a; color: #fff; }
.dd::before { content: ""; border: 5px solid transparent; border-top: 5px solid #222; border-bottom: 0; }
.dd.on::before { border-top-color: #fff; }
.handle { width: 16px; padding: 4px 3px; background: #e4e4e4; border-right: 1px solid #555; }
.handle::before { content: ""; display: block; height: 4px; border-top: 1px dotted #333; border-bottom: 1px dotted #333; }
.corner { position: absolute; right: 0; top: 0; width: 120px; height: 50px; }
.corner text { font-size: 19px; fill: #0c1050; }
.triad { position: absolute; left: 56px; bottom: 57px; width: 80px; height: 72px; overflow: visible; font: 11px "Liberation Mono", monospace; }
.triad .y { font-size: 9px; }
```
